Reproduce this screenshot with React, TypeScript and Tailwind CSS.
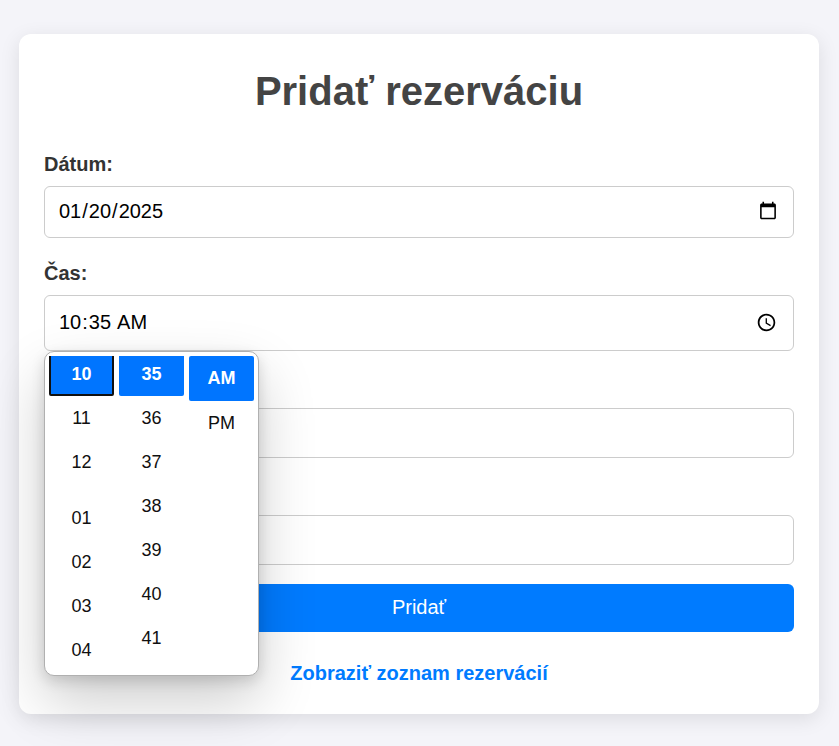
import type { ReactNode } from "react";

const hours = ["10", "11", "12", "01", "02", "03", "04"];
const minutes = ["35", "36", "37", "38", "39", "40", "41"];

const inputBase =
  "block w-full rounded-md border border-[#cccccc] bg-white px-[13px] pb-[2px] text-xl text-black outline-none";

function Field({ id, label, covered, children }: { id: string; label: string; covered?: boolean; children: ReactNode }) {
  return (
    <div className="relative mb-6">
      <label
        htmlFor={id}
        className={`mb-[10px] block h-[23px] text-xl leading-[23px] font-bold text-[#333333] ${covered ? "invisible" : ""}`}
      >
        {label}
      </label>
      {children}
    </div>
  );
}

function TimePicker() {
  return (
    <div
      role="dialog"
      aria-label="Čas"
      className="absolute top-full left-0 z-10 flex h-[325px] w-[215px] gap-[5px] rounded-[10px] border border-[#b0b0b0] bg-white p-1 text-lg text-[#101010] shadow-[0_25px_57px_rgba(0,0,0,0.2),0_5px_14px_rgba(0,0,0,0.14)]"
    >
      <div className="flex-1 overflow-hidden">
        {hours.map((hour, i) => (
          <button
            key={hour}
            type="button"
            className={
              i === 0
                ? "-mt-1 block h-11 w-full rounded-xs border-2 border-[#101010] bg-[#0075ff] font-bold text-white"
                : hour === "01"
                  ? "mt-3 block h-11 w-full"
                  : "block h-11 w-full"
            }
          >
            {hour}
          </button>
        ))}
      </div>
      <div className="flex-1 overflow-hidden">
        {minutes.map((minute, i) => (
          <button
            key={minute}
            type="button"
            className={
              i === 0
                ? "-mt-1 block h-11 w-full rounded-xs bg-[#0075ff] font-bold text-white"
                : "block h-11 w-full"
            }
          >
            {minute}
          </button>
        ))}
      </div>
      <div className="flex-1 overflow-hidden">
        <button type="button" className="block h-[45px] w-full rounded-xs bg-[#0075ff] pb-[2px] font-bold text-white">
          AM
        </button>
        <button type="button" className="block h-[45px] w-full pb-[2px]">
          PM
        </button>
      </div>
    </div>
  );
}

export default function App() {
  return (
    <div className="min-h-screen bg-[#f4f4f9] py-[34px] pr-5 pl-[19px] font-['Liberation_Sans',Arial,sans-serif]">
      <main className="mx-auto max-w-[800px] rounded-xl bg-white px-[25px] pt-[34px] pb-[29px] shadow-[0_5px_20px_rgba(0,0,0,0.1)]">
        <h1 className="mb-[39px] text-center text-[40px] leading-[46px] font-bold text-[#444444]">
          Pridať rezerváciu
        </h1>
        <form>
          <Field id="date" label="Dátum:">
            <input id="date" type="date" defaultValue="2025-01-20" className={`${inputBase} h-[52px]`} />
          </Field>
          <Field id="time" label="Čas:">
            <input id="time" type="time" defaultValue="10:35" className={`${inputBase} h-14`} />
            <TimePicker />
          </Field>
          <Field id="name" label="Meno:" covered>
            <input id="name" type="text" className={`${inputBase} h-[50px]`} />
          </Field>
          <Field id="phone" label="Telefón:" covered>
            <input id="phone" type="text" className={`${inputBase} h-[50px]`} />
          </Field>
          <button
            type="submit"
            className="-mt-[5px] block h-12 w-full rounded-md bg-[#007bff] pb-[2px] text-xl text-white"
          >
            Pridať
          </button>
        </form>
        <a
          href="#zoznam"
          className="mx-auto mt-[30px] block w-fit text-xl leading-[23px] font-bold text-[#007bff]"
        >
          Zobraziť zoznam rezervácií
        </a>
      </main>
    </div>
  );
}
